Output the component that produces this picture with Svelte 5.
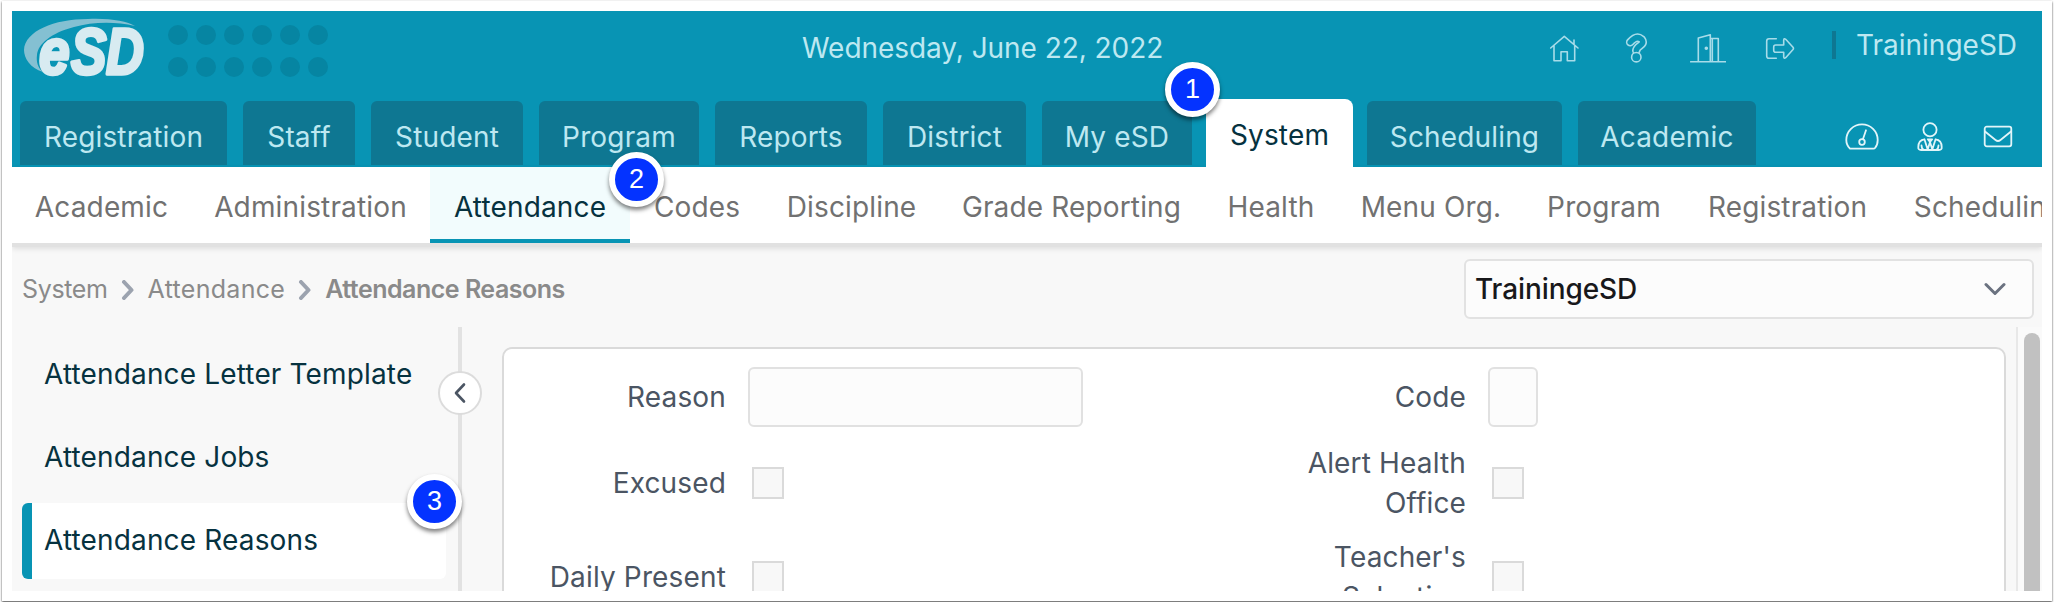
<script lang="ts">
	interface Tab {
		name: string;
		width: number;
	}

	interface Field {
		label: string;
		kind: 'text' | 'short' | 'check';
	}

	const dots = Array.from({ length: 12 });
	const tabs: Tab[] = [
		{ name: 'Registration', width: 207 },
		{ name: 'Staff', width: 112 },
		{ name: 'Student', width: 152 },
		{ name: 'Program', width: 160 },
		{ name: 'Reports', width: 152 },
		{ name: 'District', width: 143 },
		{ name: 'My eSD', width: 150 },
		{ name: 'System', width: 147 },
		{ name: 'Scheduling', width: 195 },
		{ name: 'Academic', width: 178 }
	];
	const sections: Tab[] = [
		{ name: 'Academic', width: 179 },
		{ name: 'Administration', width: 239 },
		{ name: 'Attendance', width: 200 },
		{ name: 'Codes', width: 134 },
		{ name: 'Discipline', width: 175 },
		{ name: 'Grade Reporting', width: 265 },
		{ name: 'Health', width: 134 },
		{ name: 'Menu Org.', width: 186 },
		{ name: 'Program', width: 160 },
		{ name: 'Registration', width: 207 },
		{ name: 'Scheduling', width: 195 }
	];
	const pages = ['Attendance Letter Template', 'Attendance Jobs', 'Attendance Reasons'];
	const rows: [Field, Field][] = [
		[
			{ label: 'Reason', kind: 'text' },
			{ label: 'Code', kind: 'short' }
		],
		[
			{ label: 'Excused', kind: 'check' },
			{ label: 'Alert Health Office', kind: 'check' }
		],
		[
			{ label: 'Daily Present', kind: 'check' },
			{ label: "Teacher's Selection", kind: 'check' }
		]
	];

	let activeTab = $state('System');
	let activeSection = $state('Attendance');
	let activePage = $state('Attendance Reasons');
</script>

<div class="frame">
	<div class="app">
		<header>
			<div class="topbar">
				<svg class="logo" width="124" height="64" viewBox="0 0 124 64">
					<path
						d="M19 53C6 49 0 39 0 31C1 12 30 0 64 0C85 -1 103 2 111 7C90 2 68 3 50 8C27 14 14 25 13 36C12 43 14 49 19 53Z"
					/>
					<g>
						<text transform="translate(15 55) scale(.86 1)">e</text>
						<text transform="translate(47 55) scale(.83 1)">S</text>
						<text transform="translate(82 55) scale(.82 1)">D</text>
					</g>
				</svg>
				<div class="dots">
					{#each dots as _}
						<i></i>
					{/each}
				</div>
				<div class="date">Wednesday, June 22, 2022</div>
				<div class="tools">
					<svg viewBox="0 0 36 36">
						<path d="M4.7 17 18.3 5.3 32 17M28 13V9M8 14.5V29.7H15V20.7H21.3V29.7H28.7V14.5" />
					</svg>
					<svg viewBox="0 0 36 36">
						<path class="tube" d="M12.2 11.2Q18.5 4 23.5 8.2C28 14 18.8 14.5 18.3 19.5" />
						<path class="core" d="M12.2 11.2Q18.5 4 23.5 8.2C28 14 18.8 14.5 18.3 19.5" />
						<circle class="base" cx="18.3" cy="26.2" r="4.7" />
					</svg>
					<svg viewBox="0 0 36 36">
						<path d="M.7 30.7H35.7M8.3 30.7V7L20.3 3.7V30.7M20.3 7.5H28.3V30.7M22.3 7.5V30.7" />
						<circle class="fill" cx="16.3" cy="17.3" r="1" />
					</svg>
					<svg viewBox="0 0 36 36">
						<path
							d="M14.3 7.7H7Q4.7 7.7 4.7 10V25Q4.7 27.3 7 27.3H14.3M13.7 14H21.7V9Q22 7 23.7 8.3L31 16.3Q31.9 17.4 31 18.5L23.7 26.7Q22 28 21.7 26V21.3H13.7Q11.7 21.3 11.7 19.3V16Q11.7 14 13.7 14Z"
						/>
					</svg>
				</div>
				<div class="user">TrainingeSD</div>
			</div>
			<div class="tabbar">
				<nav class="tabs">
					{#each tabs as tab}
						<button
							class:active={tab.name === activeTab}
							style:width="{tab.width}px"
							onclick={() => (activeTab = tab.name)}>
							{tab.name}
						</button>
					{/each}
				</nav>
				<div class="shortcuts">
					<svg viewBox="0 0 36 36">
						<path d="M6 30.7Q2.3 27 2.3 22C2.3 13 9.5 6.3 18 6.3S33.7 13 33.7 22Q33.7 27 31 30Q30.5 30.7 29.5 30.7ZM22 12.3 19 21" />
						<circle cx="18" cy="24" r="2.8" />
					</svg>
					<svg viewBox="0 0 36 36">
						<circle cx="18" cy="11.7" r="6.6" />
						<path d="M12.5 21.3Q6.3 22 6.3 29Q6 32 9 32H27Q30 32 29.7 29Q29.7 22 23.5 21.3M12.5 21.5 15.7 31.5 18 24 20.3 31.5 23.5 21.5M15.8 21.3H20.2L18 24ZM9.5 27.5Q9.8 31.5 12 32M26.5 27.5Q26.2 31.5 24 32" />
					</svg>
					<svg viewBox="0 0 36 36">
						<rect x="4.7" y="8.7" width="26.6" height="19.6" rx="2" />
						<path d="M5 13.5 15.5 22Q18 24 20.5 22L31 13.5" />
					</svg>
				</div>
			</div>
		</header>

		<nav class="sections">
			{#each sections as section}
				<button
					class:active={section.name === activeSection}
					style:width="{section.width}px"
					onclick={() => (activeSection = section.name)}>
					{section.name}
				</button>
			{/each}
		</nav>

		<div class="crumbbar">
			<div class="crumbs">
				<span>System</span>
				<svg viewBox="0 0 14 20"><path d="M3 2 10.5 10 3 18" /></svg>
				<span class="parent">Attendance</span>
				<svg viewBox="0 0 14 20"><path d="M3 2 10.5 10 3 18" /></svg>
				<strong>Attendance Reasons</strong>
			</div>
			<div class="school">
				<span>TrainingeSD</span>
				<svg viewBox="0 0 22 14"><path d="M2 2.5 11 11.5 20 2.5" /></svg>
			</div>
		</div>

		<div class="content">
			<aside>
				{#each pages as page}
					<button class:active={page === activePage} onclick={() => (activePage = page)}>
						{page}
					</button>
				{/each}
			</aside>
			<div class="divider">
				<button class="collapse" aria-label="Collapse menu">
					<svg viewBox="0 0 14 22"><path d="M11 2.5 3 11 11 19.5" /></svg>
				</button>
			</div>
			<main>
				<div class="panel">
					{#each rows as row}
						<div class="row">
							{#each row as field}
								<label>
									<span>{field.label}</span>
									<i class={field.kind}></i>
								</label>
							{/each}
						</div>
					{/each}
				</div>
			</main>
			<div class="scrollbar"><i></i></div>
		</div>
	</div>

	<div class="step one">1</div>
	<div class="step two">2</div>
	<div class="step three">3</div>
</div>

<style>
	:global(body) {
		background: #fff;
		overflow: hidden;
	}

	.frame {
		position: relative;
		box-sizing: border-box;
		width: 2050px;
		height: 600px;
		margin: 1px 2px;
		padding: 10px;
		background: #fff;
		box-shadow: 0 1px 2px rgba(0, 0, 0, 0.75);
		font-family: Inter, 'Liberation Sans', sans-serif;
		font-size: 28px;
		font-weight: 380;
		letter-spacing: 0.15px;
	}

	button {
		border: 0;
		margin: 0;
		padding: 0;
		background: none;
		font: inherit;
		letter-spacing: inherit;
		white-space: nowrap;
		cursor: pointer;
	}

	svg {
		display: block;
		flex: none;
		fill: none;
		stroke-linecap: round;
		stroke-linejoin: round;
	}

	.app {
		width: 2030px;
		height: 580px;
		overflow: hidden;
		background: #f8f8f8;
	}

	header {
		height: 156px;
		background: #0894b4;
		color: #bde8f1;
	}

	.topbar {
		display: flex;
		height: 88px;
	}

	.logo {
		margin: 8px 0 0 12px;
		overflow: visible;
	}

	.logo path {
		fill: #84c0d2;
	}

	.logo text {
		fill: #d8ebf1;
		stroke: #d8ebf1;
		stroke-width: 3.5;
		font: italic bold 64px 'Liberation Sans', sans-serif;
		letter-spacing: 0;
	}

	.dots {
		display: grid;
		grid-template-columns: repeat(6, 20px);
		grid-auto-rows: 20px;
		gap: 12px 8px;
		margin: 14px 0 0 20px;
	}

	.dots i {
		border-radius: 50%;
		background: #0685a2;
	}

	.date {
		width: 359px;
		margin: 20px 0 0 474px;
		line-height: 34px;
		white-space: nowrap;
		letter-spacing: -0.05px;
	}

	.tools {
		display: flex;
		gap: 36px;
		margin: 20px 0 0 385px;
	}

	.tools svg,
	.shortcuts svg {
		width: 36px;
		height: 36px;
		stroke: #a8dce9;
		stroke-width: 1.6;
	}

	.tools .tube {
		stroke-width: 8.6;
	}

	.tools .core {
		stroke: #0894b4;
		stroke-width: 5.4;
	}

	.tools .base {
		fill: #0894b4;
	}

	.tools .fill {
		fill: #a8dce9;
	}

	.user {
		height: 28px;
		margin: 20px 0 0 34px;
		padding-left: 20px;
		border-left: 4px solid #0e7792;
		line-height: 28px;
		letter-spacing: 0;
	}

	.tabbar {
		display: flex;
		justify-content: space-between;
	}

	.tabs {
		display: flex;
		gap: 16px;
		padding-left: 8px;
	}

	.tabs button {
		box-sizing: border-box;
		height: 64px;
		margin-top: 2px;
		padding-top: 7px;
		border-radius: 6px 6px 0 0;
		background: #0e7792;
		color: #bde8f1;
	}

	.tabs .active {
		height: 68px;
		margin: 0 -2px;
		padding-top: 4px;
		border-radius: 8px 8px 0 0;
		background: #fff;
		color: #06323f;
	}

	.shortcuts {
		display: flex;
		gap: 32px;
		margin: 19px 26px 0 0;
	}

	.shortcuts svg {
		stroke: #e2f5f9;
		stroke-width: 1.8;
	}

	.sections {
		display: flex;
		height: 76px;
		background: #fff;
		border-bottom: 4px solid #e1e1e1;
		box-shadow: 0 2px 5px rgba(0, 0, 0, 0.1);
	}

	.sections button {
		flex: none;
		box-sizing: border-box;
		padding-top: 3px;
		color: #717171;
	}

	.sections .active {
		padding-top: 7px;
		border-bottom: 4px solid #0894b4;
		background: #f2fcfd;
		color: #06323f;
	}

	.crumbbar {
		display: flex;
		justify-content: space-between;
		height: 80px;
	}

	.crumbs {
		display: flex;
		align-items: center;
		height: 84px;
		padding-left: 10px;
		font-size: 25px;
		letter-spacing: -0.35px;
		color: #8a8a8a;
	}

	.crumbs svg {
		width: 14px;
		height: 20px;
		margin: 2px 13px 0;
		stroke: #9ca3af;
		stroke-width: 4;
	}

	.crumbs .parent {
		letter-spacing: 0.3px;
	}

	.crumbs strong {
		font-weight: 600;
		letter-spacing: -0.5px;
	}

	.school {
		display: flex;
		align-items: center;
		justify-content: space-between;
		box-sizing: border-box;
		width: 570px;
		height: 60px;
		margin: 12px 8px 0 0;
		padding: 0 26px 0 9px;
		border: 2px solid #e2e2e2;
		border-radius: 6px;
		background: #fcfcfc;
		color: #18181b;
		font-weight: 500;
		letter-spacing: -0.1px;
	}

	.school svg {
		width: 22px;
		height: 14px;
		stroke: #6b7280;
		stroke-width: 3;
	}

	.content {
		display: flex;
		height: 264px;
	}

	aside {
		display: flex;
		flex-direction: column;
		gap: 7px;
		width: 424px;
		padding: 10px 12px 0 10px;
	}

	aside button {
		flex: none;
		height: 76px;
		padding: 0 0 3px 12px;
		border-left: 10px solid transparent;
		border-radius: 6px;
		color: #06323f;
		text-align: left;
	}

	aside .active {
		border-color: #0894b4;
		background: #fff;
	}

	.divider {
		display: flex;
		justify-content: center;
		flex: none;
		width: 4px;
		background: #e2e2e2;
	}

	.collapse {
		display: flex;
		align-items: center;
		justify-content: center;
		flex: none;
		box-sizing: border-box;
		width: 44px;
		height: 44px;
		margin-top: 44px;
		border: 2px solid #dcdcdc;
		border-radius: 50%;
		background: #fff;
	}

	.collapse svg {
		width: 14px;
		height: 22px;
		stroke: #4b5563;
		stroke-width: 2.6;
	}

	main {
		flex: 1;
		padding: 20px 10px 0 40px;
	}

	.panel {
		box-sizing: border-box;
		height: 320px;
		padding-top: 18px;
		border: 2px solid #dadada;
		border-radius: 10px;
		background: #fff;
	}

	.row {
		display: flex;
	}

	.row + .row {
		height: 80px;
		margin-top: 14px;
	}

	.row:nth-child(2) {
		margin-top: 16px;
	}

	label {
		display: flex;
		align-items: center;
		width: 740px;
		color: #4b5563;
		line-height: 40px;
	}

	label span {
		width: 190px;
		margin-left: 32px;
		text-align: right;
	}

	label i {
		box-sizing: border-box;
		margin-left: 22px;
		border: 2px solid #e1e1e1;
		border-radius: 6px;
		background: #fcfcfc;
	}

	.text {
		width: 335px;
		height: 60px;
	}

	.short {
		width: 50px;
		height: 60px;
	}

	.check {
		width: 32px;
		height: 32px;
		margin-left: 26px;
		border-color: #dadada;
		border-radius: 0;
		background: #f8f8f8;
	}

	.scrollbar {
		box-sizing: border-box;
		width: 26px;
		padding: 6px 2px 0 6px;
		border-left: 2px solid #e8e8e8;
		background: #fafafa;
	}

	.scrollbar i {
		display: block;
		height: 300px;
		border-radius: 8px;
		background: #c1c1c1;
	}

	/* Numbered callouts over the page */
	.step {
		position: absolute;
		box-sizing: border-box;
		width: 55px;
		height: 55px;
		border: 6px solid #fff;
		border-radius: 50%;
		background: #0433ff;
		box-shadow: 0 3px 4px rgba(0, 0, 0, 0.5);
		color: #fff;
		font: 27px/43px 'Liberation Sans', sans-serif;
		letter-spacing: 0;
		text-align: center;
	}

	.one {
		left: 1163px;
		top: 61px;
	}

	.two {
		left: 607px;
		top: 151px;
	}

	.three {
		left: 405px;
		top: 473px;
	}
</style>
